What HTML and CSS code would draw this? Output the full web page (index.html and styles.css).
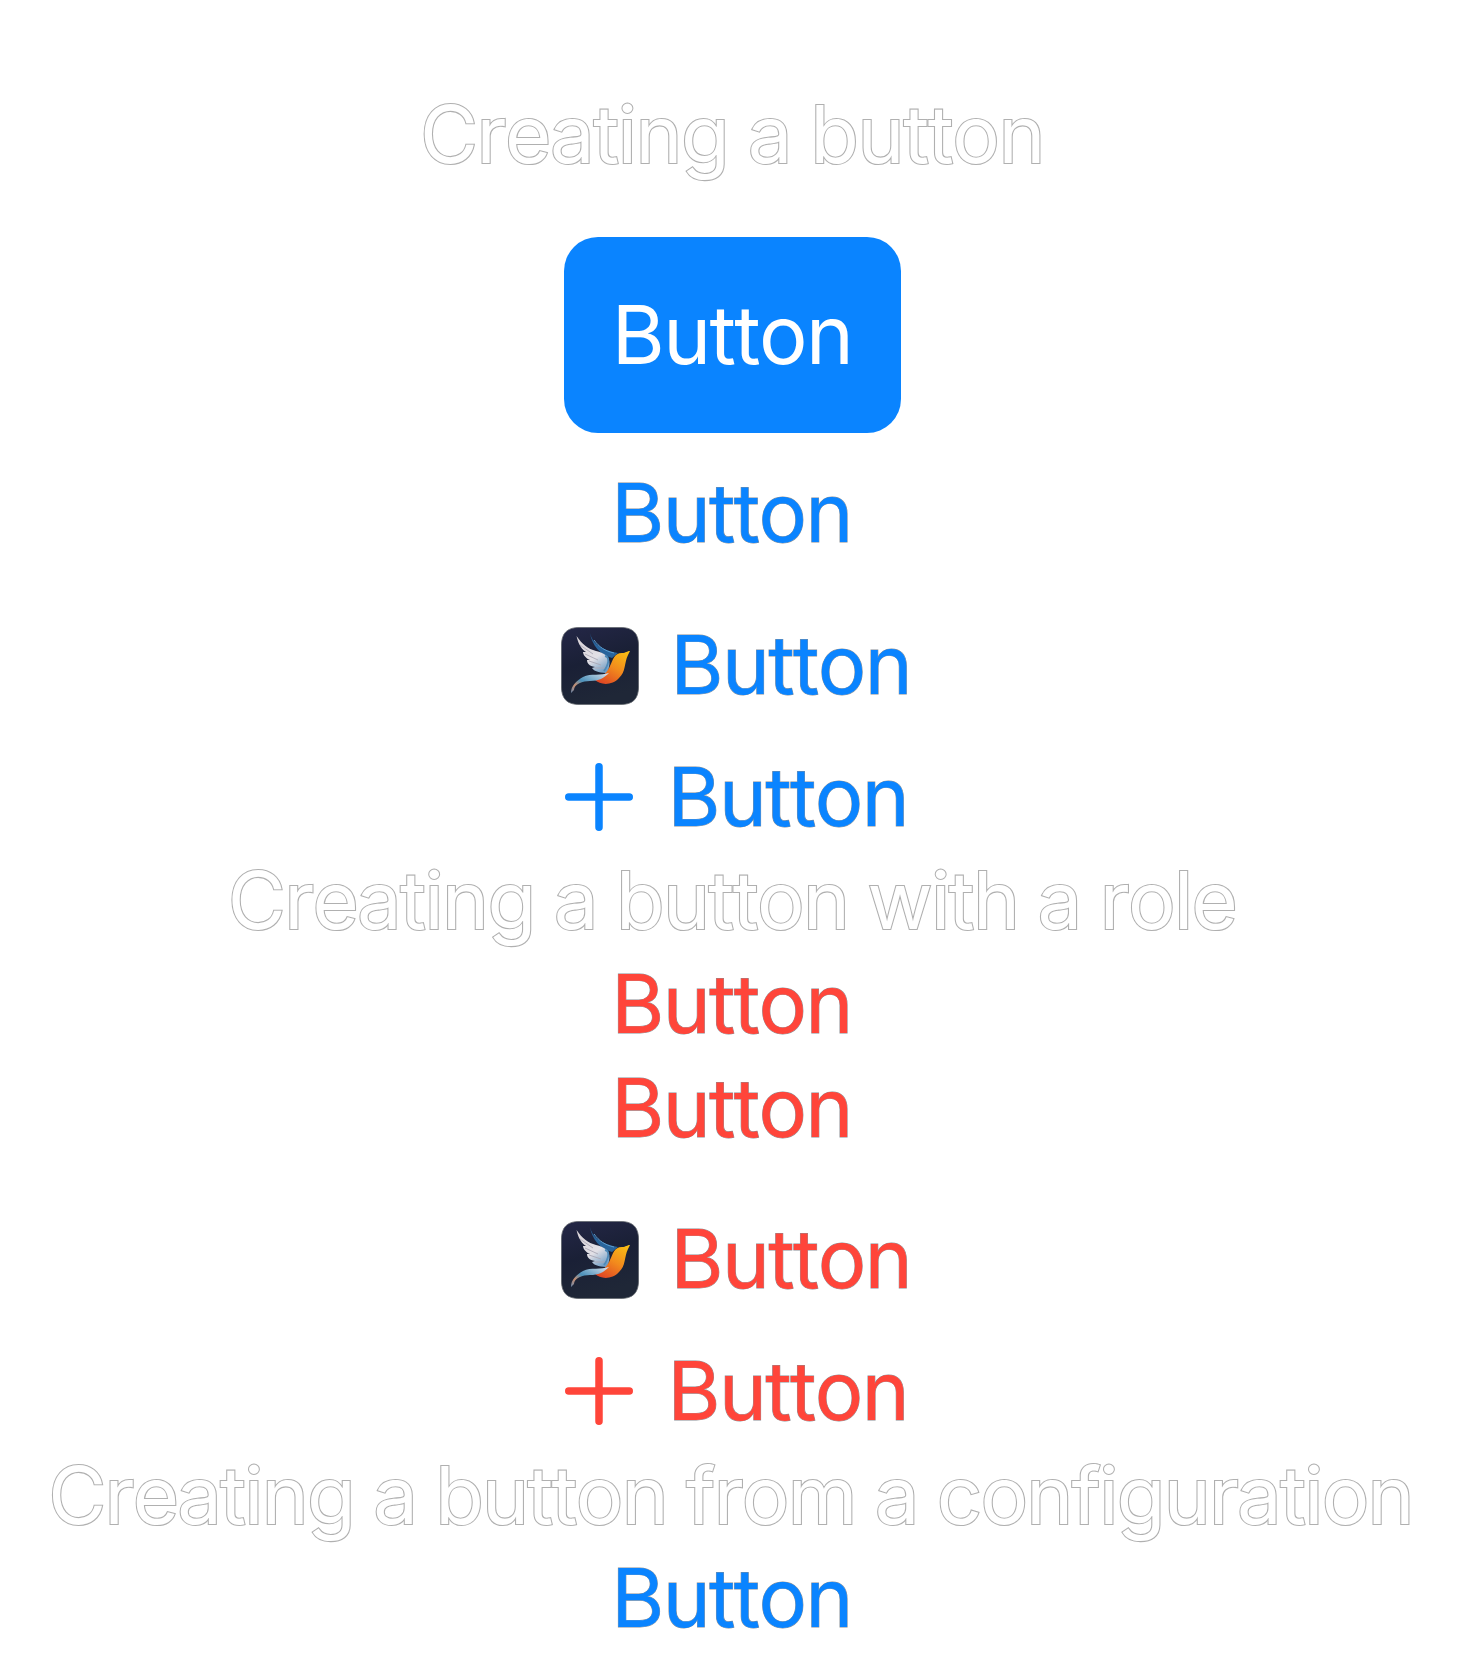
FILE: index.html
```html
<!DOCTYPE html>
<html lang="en">
<head>
<meta charset="utf-8">
<title>Buttons</title>
<link rel="stylesheet" href="styles.css">
</head>
<body>
<svg class="defs" width="0" height="0" aria-hidden="true">
  <defs>
    <linearGradient id="tile" x1="0" y1="0" x2="0.3" y2="1"><stop offset="0" stop-color="#242747"/><stop offset="0.5" stop-color="#1a2036"/><stop offset="1" stop-color="#1f2737"/></linearGradient>
    <linearGradient id="body" x1="0.85" y1="0" x2="0.2" y2="1"><stop offset="0" stop-color="#f9bd14"/><stop offset="0.5" stop-color="#f28a1d"/><stop offset="1" stop-color="#de4524"/></linearGradient>
    <linearGradient id="wing" x1="0.2" y1="0" x2="0.8" y2="1"><stop offset="0" stop-color="#d9d3d8"/><stop offset="0.6" stop-color="#e2e0e6"/><stop offset="1" stop-color="#6d9cc4"/></linearGradient>
    <linearGradient id="tail" x1="0" y1="1" x2="1" y2="0"><stop offset="0" stop-color="#6b88ab"/><stop offset="0.25" stop-color="#c58d70"/><stop offset="0.45" stop-color="#4b91bb"/><stop offset="1" stop-color="#dfe4ee"/></linearGradient>
    <symbol id="bird" viewBox="0 0 78 78">
      <path d="M19 .4H59C72 .4 77.6 6 77.6 19V59C77.6 72 72 77.6 59 77.6H19C6 77.6 .4 72 .4 59V19C.4 6 6 .4 19 .4Z" fill="url(#tile)" stroke="#60646b" stroke-width=".8"/>
      <path d="M29 6C31 16 40 23 57 26L51 31C39 28 31 18 29 6Z" fill="#29649b"/>
      <path d="M33 13C38 20 44 24 53 26" fill="none" stroke="#5c9dce" stroke-width="1"/>
      <path d="M15.500 9C21 17 27 22 35 24C43 26 49 29 48.500 37L47 46C41 46 33 45 31 41L34 40C28 39 26 36 26 33L29 33C24 31 22 27 22 25L25 25C19 21 17 15 15.500 9Z" fill="url(#wing)"/>
      <path d="M19 18L32 27M24 27L37 33M28 34L40 38M34 41L44 41" fill="none" stroke="#aaa8b6" stroke-width=".9"/>
      <path d="M44 29C49 30 48 37 43 44" fill="none" stroke="#4c89b8" stroke-width="1.800"/>
      <path d="M69 24C66 24 65 26 61 26C53 26 52 33 49 39C46 46 41 50 34 53C39 58 51 59 58 51C65 45 63 36 67 28Z" fill="url(#body)"/>
      <path d="M48 46C40 49 30 46 22 50C15 54 10 59 10 66L13 63C13 57 22 54 29 54C38 54 43 51 48 46Z" fill="url(#tail)"/>
    </symbol>
    <symbol id="plus" viewBox="0 0 68 68">
      <path d="M34 3.750V64.250M3.750 34H64.250" fill="none" stroke="currentColor" stroke-width="7.500" stroke-linecap="round"/>
    </symbol>
  </defs>
</svg>
<main class="list">
  <h2 class="heading first">Creating a button</h2>
  <button class="btn filled"><span class="label">Button</span></button>
  <button class="btn plain after-filled"><span class="label">Button</span></button>
  <button class="btn plain with-image"><svg class="bird"><use href="#bird"/></svg><span class="label">Button</span></button>
  <button class="btn plain with-symbol"><svg class="plus"><use href="#plus"/></svg><span class="label">Button</span></button>
  <h2 class="heading second">Creating a button with a role</h2>
  <button class="btn plain destructive"><span class="label">Button</span></button>
  <button class="btn plain destructive"><span class="label">Button</span></button>
  <button class="btn plain destructive with-image"><svg class="bird"><use href="#bird"/></svg><span class="label">Button</span></button>
  <button class="btn plain destructive with-symbol"><svg class="plus"><use href="#plus"/></svg><span class="label">Button</span></button>
  <h2 class="heading third">Creating a button from a configuration</h2>
  <button class="btn plain"><span class="label">Button</span></button>
</main>
</body>
</html>
```
FILE: styles.css
```css
body {
  margin: 0;
  background: #fff;
  font-family: Inter, "Liberation Sans", sans-serif;
  font-size: 81px;
  line-height: 103.500px;
  font-kerning: none;
  font-variant-ligatures: none;
  overflow: hidden;
}
.defs { position: absolute; }
.list {
  display: flex;
  flex-direction: column;
  align-items: center;
  padding-top: 82px;
}
.heading {
  margin: .700px 0 -.700px;
  font-size: 79.500px;
  font-weight: 400;
  white-space: nowrap;
  color: #fff;
  -webkit-text-stroke: 2.200px #b0b0b0;
  paint-order: stroke fill;
  word-spacing: -1.500px;
}
.first { margin-bottom: 50.800px; letter-spacing: -1.450px; }
.second { letter-spacing: -1.650px; }
.third { margin-left: -3px; letter-spacing: -1.760px; }
.btn {
  display: flex;
  align-items: center;
  justify-content: center;
  border: 0;
  padding: 0;
  background: none;
  font: inherit;
  font-kerning: none;
  color: #0a84ff;
  letter-spacing: -1.650px;
}
.filled {
  box-sizing: border-box;
  width: 337px;
  height: 196px;
  margin-left: 1px;
  border-radius: 34px;
  background: #0a84ff;
  color: #fff;
}
.label { margin: 1px 1px -1px 0; }
.plain .label {
  -webkit-text-stroke: .900px #8b9096;
  paint-order: stroke fill;
}
.after-filled { margin-top: 28.500px; }
.destructive { color: #ff453a; }
.with-image { margin-top: 48.200px; padding-left: 8.500px; gap: 32px; }
.with-symbol { margin-top: 28.500px; padding-left: 10px; gap: 34.500px; }
.bird { width: 78px; height: 78px; margin-top: 2px; filter: blur(.5px); }
.plus { width: 68px; height: 68px; }
```
